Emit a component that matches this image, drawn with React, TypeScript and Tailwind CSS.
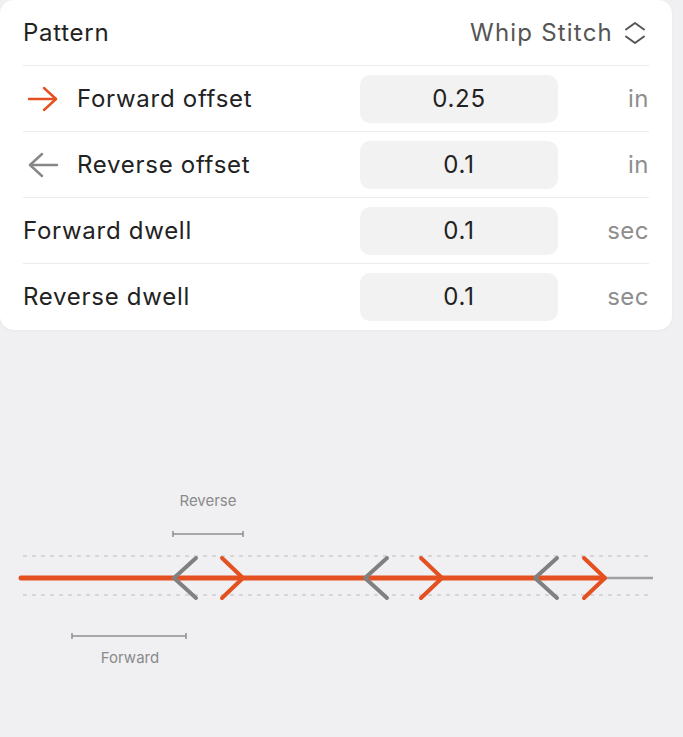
const ORANGE = '#e4501f';

type Row = {
  label: string;
  value: string;
  unit: string;
  icon?: 'forward' | 'reverse';
};

const ROWS: Row[] = [
  { label: 'Forward offset', value: '0.25', unit: 'in', icon: 'forward' },
  { label: 'Reverse offset', value: '0.1', unit: 'in', icon: 'reverse' },
  { label: 'Forward dwell', value: '0.1', unit: 'sec' },
  { label: 'Reverse dwell', value: '0.1', unit: 'sec' },
];

function Arrow({ dir }: { dir: 'forward' | 'reverse' }) {
  const color = dir === 'forward' ? ORANGE : '#868686';
  return (
    <svg
      width="32"
      height="26"
      viewBox="0 0 32 26"
      fill="none"
      stroke={color}
      strokeWidth="2.4"
      strokeLinecap="round"
      strokeLinejoin="round"
      className={dir === 'reverse' ? 'scale-x-[-1]' : ''}
    >
      <path d="M2 13H29" />
      <path d="M17 2L29 13L17 24" />
    </svg>
  );
}

function UpDown() {
  return (
    <svg
      width="22"
      height="24"
      viewBox="0 0 22 24"
      fill="none"
      stroke="#555"
      strokeWidth="2"
      strokeLinecap="round"
      strokeLinejoin="round"
    >
      <path d="M2 8.5L11 2L20 8.5" />
      <path d="M2 15.5L11 22L20 15.5" />
    </svg>
  );
}

function Diagram() {
  const gray = '#808080';
  const revTips = [174, 365, 535];
  const fwdTips = [243, 442, 605];
  return (
    <svg width="683" height="210" viewBox="0 0 683 210" className="block">
      <text
        x="208"
        y="35"
        textAnchor="middle"
        fontSize="15"
        fill="#8a8a8a"
        fontFamily="Inter, sans-serif"
      >
        Reverse
      </text>
      <g stroke="#8f8f8f" strokeWidth="1.5">
        <path d="M173 63H243M173 60V66M243 60V66" />
        <path d="M72 165H186M72 162V168M186 162V168" />
      </g>
      <text
        x="130"
        y="192"
        textAnchor="middle"
        fontSize="15"
        fill="#8a8a8a"
        fontFamily="Inter, sans-serif"
      >
        Forward
      </text>
      <g stroke="#d6d6d8" strokeWidth="2" strokeDasharray="4 5">
        <path d="M23 85H653" />
        <path d="M23 124H653" />
      </g>
      <path d="M600 107H653" stroke="#a0a0a0" strokeWidth="2.5" />
      <path
        d="M21 107H604"
        stroke={ORANGE}
        strokeWidth="5"
        strokeLinecap="round"
      />
      <g
        stroke={gray}
        strokeWidth="4"
        strokeLinecap="round"
        strokeLinejoin="round"
        fill="none"
      >
        {revTips.map(x => (
          <path key={x} d={`M${x + 22} 87L${x} 107L${x + 22} 127`} />
        ))}
      </g>
      <g
        stroke={ORANGE}
        strokeWidth="4"
        strokeLinecap="round"
        strokeLinejoin="round"
        fill="none"
      >
        {fwdTips.map(x => (
          <path key={x} d={`M${x - 21} 87L${x} 107L${x - 21} 127`} />
        ))}
      </g>
    </svg>
  );
}

export default function App() {
  return (
    <div className="min-h-[737px] w-[683px] bg-[#f0f0f3] font-['Inter',sans-serif] text-[#222]">
      <div className="w-[672px] rounded-[14px] bg-white px-[23px] shadow-[0_1px_3px_rgba(0,0,0,0.04)]">
        <div className="flex h-[66px] items-center justify-between border-b border-[#ebebeb]">
          <span className="text-[24px] tracking-[0.03em]">Pattern</span>
          <div className="flex items-center gap-[11px] pr-[3px] text-[24px] tracking-[0.05em] text-[#555]">
            <span>Whip Stitch</span>
            <UpDown />
          </div>
        </div>
        {ROWS.map((row, i) => (
          <div
            key={row.label}
            className={`flex h-[66px] items-center ${
              i < ROWS.length - 1 ? 'border-b border-[#ebebeb]' : ''
            }`}
          >
            <div className="flex w-[337px] items-center gap-[18px] text-[24px] tracking-[0.03em]">
              {row.icon && (
                <span className="ml-[4px] flex">
                  <Arrow dir={row.icon} />
                </span>
              )}
              <span>{row.label}</span>
            </div>
            <div className="flex h-[48px] w-[198px] items-center justify-center rounded-[10px] bg-[#f2f2f3] text-[24px] tracking-[0.03em]">
              {row.value}
            </div>
            <span className="flex-1 text-right text-[24px] tracking-[0.02em] text-[#8e8e8e]">
              {row.unit}
            </span>
          </div>
        ))}
      </div>
      <div className="mt-[141px]">
        <Diagram />
      </div>
    </div>
  );
}
